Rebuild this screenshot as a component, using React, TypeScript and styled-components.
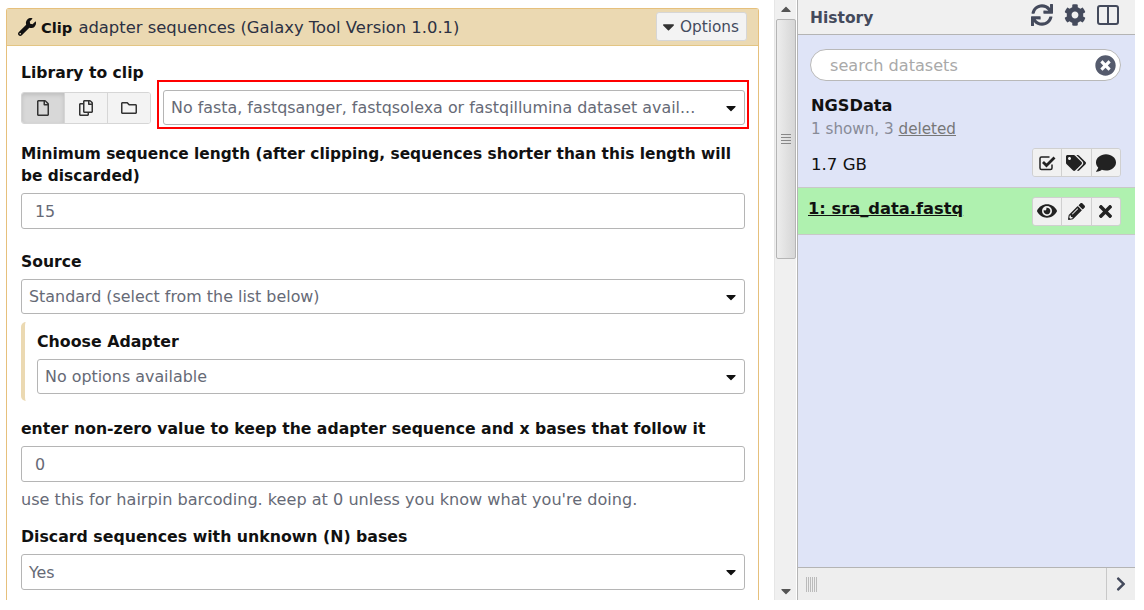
import React from "react";
import styled, { createGlobalStyle } from "styled-components";
import {
  FaWrench, FaCaretDown, FaRegFile, FaRegCopy, FaRegFolder, FaSync, FaCog,
  FaTimesCircle, FaTags, FaComment, FaEye, FaPencilAlt, FaTimes, FaChevronRight,
} from "react-icons/fa";

const Global = createGlobalStyle`
  html, body { margin: 0; padding: 0; background: #fff; overflow: hidden; }
  body { font-family: "DejaVu Sans", Verdana, sans-serif; color: #111; }
`;
const Page = styled.div`
  display: flex; width: 1135px; height: 600px; overflow: hidden;
`;
const Center = styled.div`
  width: 774px; flex: none; box-sizing: border-box; padding: 8px 15px 0 6px; overflow: hidden;
`;
const Card = styled.div`
  border: 1px solid #e6c07c; border-bottom: none; border-radius: 3px 3px 0 0; height: 640px; box-sizing: border-box;
`;
const CardHead = styled.div`
  height: 37px; box-sizing: border-box; background: #ebd9b2; border-bottom: 1px solid #e3c583;
  display: flex; align-items: center; justify-content: space-between; padding: 0 11px 0 11px;
  font-size: 16.4px;
`;
const Title = styled.div`
  display: flex; align-items: center; gap: 5px; color: #111;
  span { color: #2c3143; }
  b { font-weight: 700; font-size: 14.6px; color: #111; margin-right: 1px; }
`;
const OptionsButton = styled.button`
  display: flex; align-items: center; gap: 2px; height: 29px; width: 91px; box-sizing: border-box; padding: 0 0 0 2px;
  background: #f3f3f3; border: 1px solid #d6d6d6; border-radius: 3px; font: inherit; font-size: 15.3px; color: #444b5e; margin-top: -1px;
  svg { font-size: 19px; color: #333; flex: none; }
`;
const Body = styled.div`
  padding: 16px 13px 0 14px; display: flex; flex-direction: column;
`;
const Label = styled.div<{ $size?: number; $mb?: number }>`
  font-weight: 700; font-size: ${(p) => p.$size ?? 15.6}px; line-height: 22px; color: #111; margin-bottom: ${(p) => p.$mb ?? 6}px;
`;
const Row = styled.div`
  display: flex; align-items: flex-start; gap: 6px; margin-bottom: 17px; height: 36px;
`;
const Group = styled.div`
  display: flex; flex: none; width: 130px; height: 32px; margin-top: 2px; box-sizing: border-box; border: 1px solid #d6d6d6; border-radius: 3px; overflow: hidden;
`;
const GroupBtn = styled.div<{ $on?: boolean }>`
  flex: 1; display: flex; align-items: center; justify-content: center; font-size: 16px; color: #333;
  background: ${(p) => (p.$on ? "#d8d8d8" : "#f3f3f3")};
  box-shadow: ${(p) => (p.$on ? "inset 0 2px 4px rgba(0,0,0,.12)" : "none")};
  & + & { border-left: 1px solid #d6d6d6; }
`;
const Highlight = styled.div`
  flex: 1; min-width: 0; border: 2px solid #ff0000; padding: 8px 2px 1px 4px; margin: -10px -4px 0 0; box-sizing: border-box; height: 49px;
`;
const Select = styled.div<{ $mb?: number; $h?: number }>`
  display: flex; align-items: center; justify-content: space-between; box-sizing: border-box; height: ${(p) => p.$h ?? 36}px; width: 100%;
  border: 1px solid #b5b5b5; border-radius: 3px; padding: 0 5px 0 7px; font-size: 15.9px; color: #666a76; background: #fff; white-space: nowrap;
  margin-bottom: ${(p) => p.$mb ?? 0}px; flex: none;
  svg { color: #111; font-size: 16px; flex: none; }
`;
const InputBox = styled(Select)`
  padding-left: 13px;
`;
const Section = styled.div`
  border-left: 4px solid #ebd9b2; border-radius: 5px 0 0 5px; padding: 9px 0 7px 12px; margin-bottom: 17px;
`;
const Help = styled.div`
  font-size: 16.1px; line-height: 20px; color: #666a76; margin: 8px 0 16px; white-space: nowrap;
`;
const ScrollTrack = styled.div`
  width: 22px; flex: none; height: 600px; background: #f0f0f0; border-left: 1px solid #e6e6e6; box-sizing: border-box;
  display: flex; flex-direction: column; align-items: center;
`;
const ScrollCap = styled.div`
  height: 19px; flex: none; display: flex; align-items: center; justify-content: center; color: #555; font-size: 16px;
`;
const ScrollThumb = styled.div`
  width: 20px; height: 240px; flex: none; box-sizing: border-box; border: 1px solid #b5b5b5; border-radius: 2px;
  background: linear-gradient(90deg, #ededed, #d6d6d6); display: flex; align-items: center; justify-content: center;
`;
const Grip = styled.div`
  width: 10px; height: 10px; background: repeating-linear-gradient(180deg, #888 0 1px, transparent 1px 3px);
`;
const Spacer = styled.div`flex: 1;`;
const Side = styled.div`
  flex: 1; display: flex; flex-direction: column; border-left: 1px solid #b4b4b4; margin-left: 1px; background: #dfe4f7; box-sizing: border-box;
`;
const SideHead = styled.div`
  height: 35px; flex: none; box-sizing: border-box; background: #f0f0f0; border-bottom: 1px solid #b4b4b4;
  display: flex; align-items: center; justify-content: space-between; padding: 0 16px 0 12px;
`;
const SideTitle = styled.div`
  font-weight: 700; font-size: 15.5px; color: #444a5c; margin-top: 2px;
`;
const SideIcons = styled.div`
  display: flex; align-items: center; gap: 11px; font-size: 22px; color: #444a5c; margin-top: -4px;
`;
const Search = styled.div`
  margin: 14px 14px 0 12px; height: 32px; flex: none; box-sizing: border-box; border: 1px solid #b9b9b9; border-radius: 17px; background: #fff;
  display: flex; align-items: center; justify-content: space-between; padding: 0 4px 0 19px; font-size: 16.1px; color: #a9a9a9;
  svg { color: #555b6d; font-size: 21px; }
`;
const HistName = styled.div`
  font-weight: 700; font-size: 16.2px; margin: 14px 0 0 13px; line-height: 22px; color: #111;
`;
const Shown = styled.div`
  font-size: 15.2px; margin: 2px 0 0 13px; line-height: 20px; color: #888b97;
  u { color: #777; }
`;
const SizeRow = styled.div`
  display: flex; align-items: center; justify-content: space-between; padding: 0 14px 0 13px; margin-top: 9px; height: 29px; font-size: 16.6px; color: #111; flex: none;
`;
const SizeText = styled.span`
  margin-top: 3px;
`;
const IconGroup = styled.div`
  display: flex; width: 89px; height: 29px; box-sizing: border-box; border: 1px solid #d0d0d0; border-radius: 3px; overflow: hidden; flex: none;
`;
const IconBtn = styled.div<{ $size?: number }>`
  flex: 1; display: flex; align-items: center; justify-content: center; background: #f1f1f1; color: #222; font-size: ${(p) => p.$size ?? 20}px;
  & + & { border-left: 1px solid #d0d0d0; }
`;
const Dataset = styled.div`
  margin-top: 10px; height: 48px; flex: none; box-sizing: border-box; background: #aff1af; border-top: 1px solid #c8c8c8; border-bottom: 1px solid #c8c8c8;
  display: flex; align-items: center; justify-content: space-between; padding: 0 14px 0 10px;
`;
const DatasetName = styled.a`
  font-weight: 700; font-size: 16.3px; text-decoration: underline; color: #111; margin-top: -6px;
`;
const SideFill = styled.div`flex: 1;`;
const SideFoot = styled.div`
  height: 33px; flex: none; box-sizing: border-box; background: #eeeeee; border-top: 1px solid #b4b4b4; display: flex; align-items: center; justify-content: space-between;
`;
const FootGrip = styled.div`
  margin-left: 8px; width: 11px; height: 15px; background: repeating-linear-gradient(90deg, #bbb 0 1px, transparent 1px 2px);
`;
const FootBtn = styled.div`
  width: 28px; height: 100%; border-left: 1px solid #c8c8c8; display: flex; align-items: center; justify-content: center; color: #444a5c; font-size: 16px;
`;

const ColumnsIcon = () => (
  <svg width="22" height="20" viewBox="0 0 22 20" fill="none" stroke="currentColor" strokeWidth="2">
    <rect x="1" y="1" width="20" height="18" rx="2" />
    <path d="M11 1v18" />
  </svg>
);
const CheckSquareIcon = () => (
  <svg width="17" height="16" viewBox="0 0 17 16" fill="none" stroke="currentColor">
    <path d="M13 9.5V13a1.5 1.5 0 0 1-1.5 1.5h-9A1.5 1.5 0 0 1 1 13V3.5A1.5 1.5 0 0 1 2.500 2h8" strokeWidth="1.500" />
    <path d="M4 7l3.500 3.500L15.500 2.500" strokeWidth="2.800" />
  </svg>
);

export default function App() {
  return (
    <Page>
      <Global />
      <Center>
        <Card>
          <CardHead>
            <Title><FaWrench size={18} /><span><b>Clip</b> adapter sequences (Galaxy Tool Version 1.0.1)</span></Title>
            <OptionsButton><FaCaretDown /> Options</OptionsButton>
          </CardHead>
          <Body>
            <Label>Library to clip</Label>
            <Row>
              <Group>
                <GroupBtn $on><FaRegFile /></GroupBtn>
                <GroupBtn><FaRegCopy /></GroupBtn>
                <GroupBtn><FaRegFolder /></GroupBtn>
              </Group>
              <Highlight>
                <Select $h={35}>No fasta, fastqsanger, fastqsolexa or fastqillumina dataset avail...<FaCaretDown /></Select>
              </Highlight>
            </Row>
            <Label $size={15.4}>Minimum sequence length (after clipping, sequences shorter than this length will be discarded)</Label>
            <InputBox $mb={22}>15</InputBox>
            <Label>Source</Label>
            <Select $h={35} $mb={8}>Standard (select from the list below)<FaCaretDown /></Select>
            <Section>
              <Label $size={15.8}>Choose Adapter</Label>
              <Select $h={35}>No options available<FaCaretDown /></Select>
            </Section>
            <Label $size={15.67}>enter non-zero value to keep the adapter sequence and x bases that follow it</Label>
            <InputBox>0</InputBox>
            <Help>use this for hairpin barcoding. keep at 0 unless you know what you're doing.</Help>
            <Label $size={15.75}>Discard sequences with unknown (N) bases</Label>
            <Select>Yes<FaCaretDown /></Select>
          </Body>
        </Card>
      </Center>
      <ScrollTrack>
        <ScrollCap><FaCaretDown style={{ transform: "rotate(180deg)" }} /></ScrollCap>
        <ScrollThumb><Grip /></ScrollThumb>
        <Spacer />
        <ScrollCap><FaCaretDown /></ScrollCap>
      </ScrollTrack>
      <Side>
        <SideHead>
          <SideTitle>History</SideTitle>
          <SideIcons><FaSync /><FaCog /><ColumnsIcon /></SideIcons>
        </SideHead>
        <Search>search datasets<FaTimesCircle /></Search>
        <HistName>NGSData</HistName>
        <Shown>1 shown, 3 <u>deleted</u></Shown>
        <SizeRow>
          <SizeText>1.7 GB</SizeText>
          <IconGroup>
            <IconBtn><CheckSquareIcon /></IconBtn>
            <IconBtn><FaTags /></IconBtn>
            <IconBtn><FaComment /></IconBtn>
          </IconGroup>
        </SizeRow>
        <Dataset>
          <DatasetName>1: sra_data.fastq</DatasetName>
          <IconGroup>
            <IconBtn><FaEye /></IconBtn>
            <IconBtn $size={17}><FaPencilAlt /></IconBtn>
            <IconBtn $size={19}><FaTimes /></IconBtn>
          </IconGroup>
        </Dataset>
        <SideFill />
        <SideFoot>
          <FootGrip />
          <FootBtn><FaChevronRight /></FootBtn>
        </SideFoot>
      </Side>
    </Page>
  );
}
